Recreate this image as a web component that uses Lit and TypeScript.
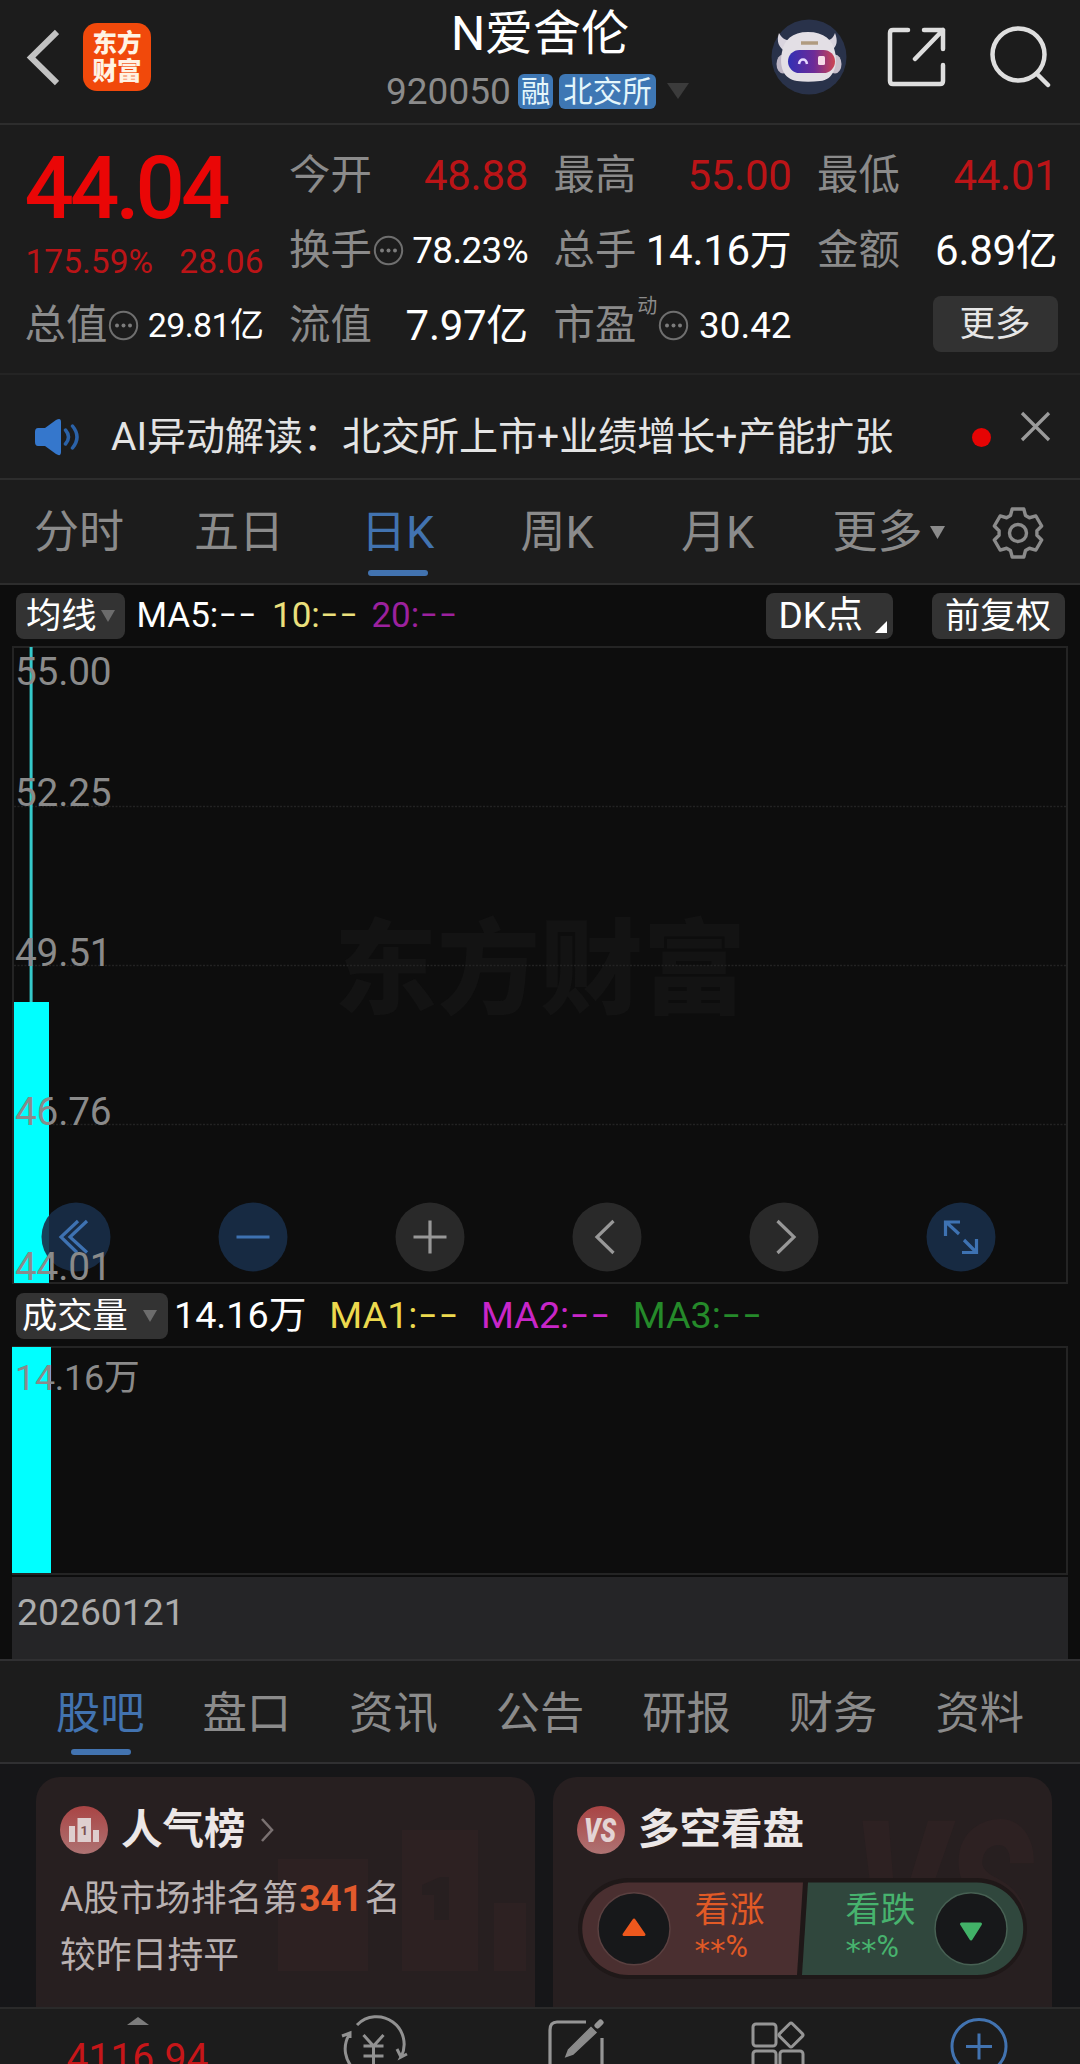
import { LitElement, html, svg, css } from "lit";
import { customElement } from "lit/decorators.js";

const shared = css`
  * { box-sizing: border-box; }
  :host {
    display: block;
    box-sizing: border-box;
    font-family: Roboto, "Noto Sans CJK SC", sans-serif;
    line-height: 1.2;
    white-space: nowrap;
  }
  svg { display: block; flex: none; }
  .row { display: flex; align-items: center; }
  .dash { font-family: Inter, sans-serif; font-size: 1.2em; font-weight: 300; line-height: 0; letter-spacing: 0.3px; position: relative; top: 1.5px; }
`;

const infoIcon = html`<svg class="info" width="31" height="31" viewBox="0 0 31 31">
  <circle cx="15.5" cy="15.5" r="13.7" fill="none" stroke="#6f6f6f" stroke-width="2" />
  <g fill="#7c7c7c"><circle cx="9" cy="15.5" r="2" /><circle cx="15.5" cy="15.5" r="2" /><circle cx="22" cy="15.5" r="2" /></g>
</svg>`;

@customElement("stock-header")
class StockHeader extends LitElement {
  static styles = [shared, css`
    :host { height: 125px; border-bottom: 2px solid #2d2d2d; position: relative; }
    .bar { height: 114px; padding: 0 29px 0 26px; justify-content: space-between; }
    .left { gap: 24px; }
    .share { margin: 0 43px 0 40px; }
    .logo { width: 68px; height: 68px; border-radius: 14px; background: #f1490b; color: #fff3e4;
      font: 900 24.5px/28px "Noto Sans CJK SC", sans-serif; text-align: center; padding-top: 5px; white-space: normal; }
    .center { position: absolute; left: 300px; right: 300px; top: 0; }
    .title { font-size: 48px; line-height: 68px; color: #fff; text-align: center; height: 68px; }
    .sub { display: flex; align-items: center; padding-left: 86px; height: 46px; color: #8b8b8b; font-size: 37px; line-height: 47px; }
    .tag { background: #3e77b4; color: #e4f6fb; border-radius: 6px; height: 35px; line-height: 36px; font-size: 29.5px; padding: 0 4px; margin-left: 6px; }
    .first { padding: 0 3px; margin-left: 7px; }
    .tri { margin-left: 11px; }
  `];
  render() {
    return html`
      <div class="bar row">
        <div class="left row">
          <svg width="33" height="60" viewBox="0 0 33 60"><path d="M31 5 5 30.500 31 56" fill="none" stroke="#c2c2c2" stroke-width="6" /></svg>
          <div class="logo">东方<br />财富</div>
        </div>
        <div class="row">
          <svg width="76" height="76" viewBox="0 0 76 76">
            <circle cx="38" cy="38" r="37.500" fill="#29324a" />
            <path d="M8 14c-3 8 0 15 6 18l8-10c-6 0-11-2-14-8zM64 14c3 8 2 13-3 17l-9-9c6 0 10-2 12-8z" fill="#d9d4de" />
            <ellipse cx="12" cy="45" rx="6.500" ry="9.500" fill="#bdb5c4" />
            <ellipse cx="64" cy="45" rx="6.500" ry="9.500" fill="#c9c0cc" />
            <path d="M37 13c16 0 25 8 27 20 3 13-1 28-15 29-8 1-16 1-23 0C12 60 8 47 11 33c2-12 10-20 26-20z" fill="#e3dfe5" />
            <path d="M30 24h17" stroke="#b09b80" stroke-width="3.500" />
            <defs><linearGradient id="visor"><stop stop-color="#3230b5" /><stop offset=".55" stop-color="#6c2b98" /><stop offset="1" stop-color="#cd4553" /></linearGradient></defs>
            <rect x="17" y="31" width="47" height="23" rx="11.500" fill="url(#visor)" />
            <path d="M28 45c1-6 7-6 8 0" fill="none" stroke="#e5d8ff" stroke-width="2.500" />
            <rect x="47" y="37" width="7" height="9" rx="1.500" fill="#f7dce8" />
          </svg>
          <svg class="share" width="59" height="60" viewBox="0 0 59 60">
            <g fill="none" stroke="#dedede" stroke-width="4.500" stroke-linecap="round" stroke-linejoin="round">
              <path d="M21 3H6Q3 3 3 6v48q0 3 3 3h47q3 0 3-3V38M37 3h19v19M56 3 28 32" />
            </g>
          </svg>
          <svg width="62" height="62" viewBox="0 0 62 62">
            <g fill="none" stroke="#dedede" stroke-width="4.500" stroke-linecap="round"><circle cx="29.500" cy="28.500" r="26" /><path d="M47.500 47.500 59 59" /></g>
          </svg>
        </div>
      </div>
      <div class="center">
        <div class="title">N爱舍伦</div>
        <div class="sub">920050<span class="tag first">融</span><span class="tag">北交所</span>
          <svg class="tri" width="22" height="16" viewBox="0 0 22 16"><path d="M0 0h22L11 16z" fill="#3b3b3b" /></svg></div>
      </div>`;
  }
}

@customElement("stock-quote")
class StockQuote extends LitElement {
  static styles = [shared, css`
    :host { height: 250px; padding: 12.5px 23px 0 24.5px; border-bottom: 2px solid #242424; }
    .grid { display: grid; grid-template-columns: 239px 239px 238px 240.5px; column-gap: 25.5px; grid-template-rows: 75px 75px 75px; }
    .main { grid-row: 1 / 4; }
    .price { height: 99px; line-height: 101px; font-size: 87px; font-weight: 500; color: #ea0606; letter-spacing: -4px; }
    .change { height: 51px; line-height: 52px; font-size: 33.5px; color: #bb1417; justify-content: space-between; padding-left: 1px; }
    .cell { height: 75px; font-size: 41.4px; color: #8b8b8b; line-height: 77px; }
    .cell .v { margin-left: auto; color: #fff; font-size: 42px; letter-spacing: -0.3px; }
    .cell .m { font-size: 36.8px; letter-spacing: -0.6px; }
    .cell .s { font-size: 34px; letter-spacing: -0.6px; }
    .cell .p { letter-spacing: 0; }
    .cell .red { color: #bb1417; }
    .info { margin-left: 1px; }
    .dyn { font-size: 20px; align-self: flex-start; line-height: 36px; margin: 0 0 0 1px; }
    .more { margin-left: auto; width: 125px; height: 56px; line-height: 56px; border-radius: 8px; background: #323232; color: #e6e6e6; font-size: 35.5px; text-align: center; margin-top: -2px; }
  `];
  render() {
    return html`<div class="grid">
      <div class="main">
        <div class="price">44.04</div>
        <div class="change row"><span>175.59%</span><span>28.06</span></div>
        <div class="cell row">总值${infoIcon}<span class="v s">29.81亿</span></div>
      </div>
      <div class="cell row">今开<span class="v red">48.88</span></div>
      <div class="cell row">最高<span class="v red">55.00</span></div>
      <div class="cell row">最低<span class="v red">44.01</span></div>
      <div class="cell row">换手${infoIcon}<span class="v m">78.23%</span></div>
      <div class="cell row">总手<span class="v">14.16万</span></div>
      <div class="cell row">金额<span class="v">6.89亿</span></div>
      <div class="cell row">流值<span class="v">7.97亿</span></div>
      <div class="cell row">市盈<span class="dyn">动</span>${infoIcon}<span class="v m p">30.42</span></div>
      <div class="cell row"><span class="more">更多</span></div>
    </div>`;
  }
}

@customElement("stock-alert")
class StockAlert extends LitElement {
  static styles = [shared, css`
    :host { height: 105px; border-bottom: 2px solid #2d2d2d; }
    .row { height: 103px; padding: 21px 29px 0 34px; }
    .msg { margin-left: 31px; font-size: 39px; line-height: 61px; color: #e4e4e4; }
    .dot { width: 19px; height: 19px; border-radius: 50%; background: #e60404; margin-left: auto; }
    .x { margin: -22px 0 0 29px; }
  `];
  render() {
    return html`<div class="row">
      <svg width="46" height="38" viewBox="0 0 46 38">
        <path d="M4 10h7L22 2q5-3 5 2v30q0 5-5 2l-11-8H4q-3 0-3-4V14q0-4 3-4z" fill="#3577cc" />
        <g fill="none" stroke="#2b62a8" stroke-width="3.500" stroke-linecap="round"><path d="M31.500 12q6 7 0 14M38.500 8q9 11 0 22" /></g>
      </svg>
      <span class="msg">AI异动解读：北交所上市+业绩增长+产能扩张</span>
      <i class="dot"></i>
      <svg class="x" width="31" height="31" viewBox="0 0 31 31"><path d="M2 2 29 29M29 2 2 29" stroke="#9a9a9a" stroke-width="3.300" /></svg>
    </div>`;
  }
}

const gear = (() => {
  const tooth = [[-7.5, -17.5], [-5.8, -24], [5.8, -24], [7.5, -17.5]];
  const pts: string[] = [];
  for (let i = 0; i < 6; i++) {
    const a = (i * Math.PI) / 3;
    for (const [x, y] of tooth) {
      pts.push(`${(x * Math.cos(a) - y * Math.sin(a)).toFixed(2)},${(x * Math.sin(a) + y * Math.cos(a)).toFixed(2)}`);
    }
  }
  return pts.join(" ");
})();

@customElement("period-tabs")
class PeriodTabs extends LitElement {
  static styles = [shared, css`
    :host { height: 105px; border-bottom: 2px solid #2d2d2d; }
    .tabs { display: grid; grid-template-columns: 160px 167px 159.500px 160.500px 151.500px 158px 60px; padding-left: 34px; height: 103px; align-items: center; font-size: 45px; color: #8b8b8b; line-height: 105px; }
    .on { color: #4273b0; position: relative; }
    .on::after { content: ""; position: absolute; left: 6.5px; bottom: 9px; width: 60px; height: 6.5px; border-radius: 3px; background: #4273b0; }
    .more { display: flex; align-items: center; gap: 7px; }
  `];
  render() {
    return html`<div class="tabs">
      <span>分时</span><span>五日</span><span class="on">日K</span><span>周K</span><span>月K</span>
      <span class="more">更多<svg width="15" height="13" viewBox="0 0 15 13"><path d="M0 0h15L7.500 13z" fill="#8b8b8b" /></svg></span>
      <svg width="54" height="54" viewBox="-27 -27 54 54"><g fill="none" stroke="#8b8b8b" stroke-width="3.400" stroke-linejoin="round"><polygon points=${gear} /><circle r="8.500" /></g></svg>
    </div>`;
  }
}

const tools: Array<{ blue: boolean; d: string }> = [
  { blue: true, d: "M2-16-15 0 1 15.500M11-16-6 0 11 15.500" },
  { blue: true, d: "M-16.500 0h33" },
  { blue: false, d: "M-16.500 0h33M0-16.500v33" },
  { blue: false, d: "M6.500-16-10 0 6.500 16" },
  { blue: false, d: "M-6.500-16 10 0-6.500 16" },
  { blue: true, d: "M-15.500-1V-15H-1M-15-15-2-3M15.500 2V15.500H1M15 15 3 3" },
];

@customElement("kline-chart")
class KlineChart extends LitElement {
  static styles = [shared, css`
    :host { background: #0d0d0d; height: 1074px; padding: 0 12px; }
    .head { height: 61px; font-size: 35px; color: #fff; padding: 0 3.500px 0 4px; }
    .btn { background: #333; border-radius: 8px; height: 46px; line-height: 48px; display: flex; align-items: center; font-size: 35.3px; }
    .ma { width: 108.5px; padding-left: 10px; gap: 4px; }
    .dk { width: 127px; padding-left: 13px; margin-left: auto; position: relative; font-size: 37px; }
    .dk svg { position: absolute; right: 6px; bottom: 6px; }
    .fq { width: 133px; justify-content: center; margin-left: 39px; }
    .g1 { margin-left: 12px; } .g2 { margin-left: 15px; } .g3 { margin-left: 13px; }
    .y1 { color: #ebe07c; } .p1 { color: #9c219e; }
    .vol { height: 62px; font-size: 37.7px; color: #fff; padding: 2px 0 0 4px; }
    .vb { width: 152px; padding-left: 6px; gap: 15px; margin: -1px 6px 0 0; }
    .y2 { color: #ecd94e; margin-left: 23px; } .p2 { color: #c826c8; margin-left: 22px; } .gr { color: #258a2a; margin-left: 22px; }
    .pane { position: relative; border: 2px solid #242424; }
    .price { height: 638px; }
    .volume { height: 229px; }
    .pane > svg { position: absolute; left: -2px; top: -2px; }
    .lab { position: absolute; left: 1px; font-size: 38.8px; line-height: 40px; color: #8a8a8a; letter-spacing: -0.2px; }
    .a { top: 4px; } .b { top: 125px; } .c { top: 285px; } .d { top: 444px; } .e { top: 599px; }
    .f { top: 10px; font-size: 35.8px; }
    .mark { position: absolute; left: 320px; top: 240px; font: 900 103px/148px "Noto Sans CJK SC", sans-serif; color: #131313; }
    .tools { position: absolute; left: 27px; right: 70px; bottom: 10px; display: flex; justify-content: space-between; }
    .date { height: 82px; margin-top: 2px; background: #252527; font-size: 37.3px; line-height: 70px; padding-left: 5px; color: #acacac; }
  `];
  render() {
    const tri = html`<svg width="14" height="12" viewBox="0 0 14 12"><path d="M0 0h14L7 12z" fill="#6c6c6c" /></svg>`;
    return html`
      <div class="head row">
        <div class="btn ma">均线${tri}</div>
        <span class="g1">MA5:<span class="dash">--</span></span>
        <span class="g2 y1">10:<span class="dash">--</span></span>
        <span class="g3 p1">20:<span class="dash">--</span></span>
        <div class="btn dk">DK点<svg width="12" height="12" viewBox="0 0 12 12"><path d="M12 0v12H0z" fill="#fff" /></svg></div>
        <div class="btn fq">前复权</div>
      </div>
      <div class="pane price">
        <div class="mark">东方财富</div>
        <svg width="1056" height="638" viewBox="0 0 1056 638">
          <path d="M2 160.500H1054M2 319.500H1054M2 478.500H1054" stroke="#232323" stroke-width="1.500" stroke-dasharray="2 1.500" />
          <rect x="17.600" y="1" width="3" height="357" fill="#35c9cb" />
          <rect x="2" y="356" width="35" height="281" fill="#00ffff" />
        </svg>
        <div class="tools">
          ${tools.map((t) => html`<svg width="70" height="70" viewBox="-35 -35 70 70">
            <circle r="34.500" fill=${t.blue ? "#182d48" : "#2c2c2c"} fill-opacity=".9" />
            ${svg`<path d=${t.d} fill="none" stroke=${t.blue ? "#3e72b2" : "#989898"} stroke-width="3.200" />`}
          </svg>`)}
        </div>
        <span class="lab a">55.00</span><span class="lab b">52.25</span><span class="lab c">49.51</span>
        <span class="lab d">46.76</span><span class="lab e">44.01</span>
      </div>
      <div class="vol row">
        <div class="btn vb">成交量${tri}</div>
        <span>14.16万</span>
        <span class="y2">MA1:<span class="dash">--</span></span>
        <span class="p2">MA2:<span class="dash">--</span></span>
        <span class="gr">MA3:<span class="dash">--</span></span>
      </div>
      <div class="pane volume">
        <svg width="1056" height="229" viewBox="0 0 1056 229"><rect x="0" y="1" width="39" height="226" fill="#00ffff" /></svg>
        <span class="lab f">14.16万</span>
      </div>
      <div class="date">20260121</div>`;
  }
}

@customElement("section-tabs")
class SectionTabs extends LitElement {
  static styles = [shared, css`
    :host { height: 105px; border-top: 2px solid #303032; border-bottom: 2px solid #303032; }
    .tabs { display: flex; justify-content: space-between; padding: 0 56px; font-size: 44.3px; line-height: 106px; color: #8b8b8b; height: 101px; }
    .on { color: #4273b0; position: relative; }
    .on::after { content: ""; position: absolute; left: 15px; top: 87.5px; width: 60px; height: 6.5px; border-radius: 3px; background: #4273b0; }
  `];
  render() {
    return html`<div class="tabs">${["股吧", "盘口", "资讯", "公告", "研报", "财务", "资料"].map(
      (t, i) => html`<span class=${i === 0 ? "on" : ""}>${t}</span>`)}</div>`;
  }
}

@customElement("insight-cards")
class InsightCards extends LitElement {
  static styles = [shared, css`
    :host { height: 243px; background: #161618; overflow: hidden; padding: 13px 27px 0 36px; }
    .cards { display: flex; gap: 18px; }
    .card { position: relative; width: 499px; height: 260px; border-radius: 24px; background: #271f20; padding: 29px 24px; overflow: hidden; }
    .bg { position: absolute; left: 0; top: 0; }
    .head { position: relative; height: 48px; color: #ece7e7; font-size: 41.5px; font-weight: 700; line-height: 50px; }
    .head .t { margin: 0 14px 0 13px; }
    .line { position: relative; font-size: 35.8px; line-height: 57px; color: #b9b1b1; }
    .l1 { margin-top: 16px; }
    .line b { color: #e25a2c; font-size: 37px; margin: 0 2px 0 1px; }
    .pill { position: absolute; left: 25px; top: 101px; }
    .opt { position: absolute; top: 113px; font-size: 35px; line-height: 42px; }
    .pct { display: flex; font-size: 30.5px; line-height: 30px; height: 30px; }
    .star { font-family: "DejaVu Sans", sans-serif; font-size: 31px; margin-top: 3px; }
    .up { left: 141.5px; color: #e25a26; }
    .down { left: 292.5px; color: #47b36e; }
  `];
  render() {
    return html`<div class="cards">
      <div class="card">
        <svg class="bg" width="499" height="260" viewBox="0 0 499 260"><g fill="#2d2122"><path d="M242 82h90v112h-90zM366 53h76v141h-76zM458 126h32v68h-32z" /></g><path d="M386 108l18-8h9v43h-15v-25h-12z" fill="#271f20" /></svg>
        <div class="head row">
          <svg width="48" height="48" viewBox="0 0 48 48">
            <defs><linearGradient id="g1" x2="0" y2="1"><stop stop-color="#a94444" /><stop offset="1" stop-color="#ae7373" /></linearGradient></defs>
            <circle cx="24" cy="24" r="24" fill="url(#g1)" /><path d="M9 20h6v16H9zM17.500 12H31v24H17.500zM33 24h6v12h-6z" fill="#decfcf" />
            <text x="24.300" y="29" font-size="13" font-weight="700" text-anchor="middle" fill="#7b5252">1</text>
          </svg>
          <span class="t">人气榜</span>
          <svg width="15" height="24" viewBox="0 0 15 24"><path d="M2 1 12 12 2 23" fill="none" stroke="#7a7171" stroke-width="2.600" /></svg>
        </div>
        <div class="line l1">A股市场排名第<b>341</b>名</div>
        <div class="line">较昨日持平</div>
      </div>
      <div class="card">
        <svg class="bg" width="499" height="260" viewBox="0 0 499 260"><text x="300" y="186" font-size="200" font-weight="900" font-style="italic" font-family="Roboto, sans-serif" textLength="180" lengthAdjust="spacingAndGlyphs" fill="#2d2122">VS</text></svg>
        <div class="head row">
          <svg width="48" height="48" viewBox="0 0 48 48">
            <defs><linearGradient id="g2" x2="0" y2="1"><stop stop-color="#a94444" /><stop offset="1" stop-color="#ae7373" /></linearGradient></defs>
            <circle cx="24" cy="24" r="24" fill="url(#g2)" />
            <text x="23" y="35.500" font-size="33" font-weight="900" font-style="italic" text-anchor="middle" textLength="32" lengthAdjust="spacingAndGlyphs" fill="#e3d4d4">VS</text>
          </svg>
          <span class="t">多空看盘</span>
        </div>
        <svg class="pill" width="450" height="102" viewBox="0 0 450 102">
          <rect width="449" height="101" rx="50.500" fill="#1f1818" />
          <path d="M50.500 4.500H225L219 97H50.500a46 46 0 0 1 0-92.500z" fill="#4a2f30" />
          <path d="M230 4.500H399a46 46 0 0 1 0 92.500H224z" fill="#30473d" />
          <circle cx="56" cy="50.700" r="36" fill="#17181a" stroke="#5a4040" stroke-width="1.500" />
          <circle cx="393" cy="50.700" r="36" fill="#17181a" stroke="#476053" stroke-width="1.500" />
          <path d="M56 42 66 56.500H46z" fill="#ee581d" stroke="#ee581d" stroke-width="3" stroke-linejoin="round" />
          <path d="M393 61 402.500 46h-19z" fill="#42b268" stroke="#42b268" stroke-width="3" stroke-linejoin="round" />
        </svg>
        <div class="opt up">看涨<div class="pct"><span class="star">**</span>%</div></div>
        <div class="opt down">看跌<div class="pct"><span class="star">**</span>%</div></div>
      </div>
    </div>`;
  }
}

@customElement("bottom-bar")
class BottomBar extends LitElement {
  static styles = [shared, css`
    :host { height: 57px; border-top: 2px solid #2a2a2a; overflow: hidden; }
    .bar { display: flex; align-items: flex-start; padding-left: 66px; }
    .idx { width: 143px; display: flex; flex-direction: column; align-items: center; padding-top: 8px; color: #c61619; font-size: 39px; line-height: 46px; }
    .idx span { margin-top: 10px; }
    .trade { margin: 6px 0 0 129px; } .edit { margin: 9px 0 0 140px; } .apps { margin: 9px 0 0 145px; } .add { margin: 8px 0 0 144px; }
  `];
  render() {
    return html`<div class="bar">
      <div class="idx"><svg width="22" height="8" viewBox="0 0 22 8"><path d="M0 8 11 0l11 8z" fill="#7c7c7c" /></svg><span>4116.94</span></div>
      <svg class="trade" width="70" height="64" viewBox="0 0 70 64">
        <g fill="none" stroke="#919191" stroke-width="3"><path d="M19 10a27.500 27.500 0 0 1 44 32l6-3M63 42l-4-8M4 21l8-3v5M11 20a27.500 27.500 0 0 0 6 35" />
        <path d="M25.500 20 35.500 31 45.500 20M35.500 31v24M25.500 31h20M25.500 41h20" /></g>
      </svg>
      <svg class="edit" width="56" height="60" viewBox="0 0 56 60">
        <path d="M38 4H9Q2 4 2 12v60M54 20v52" fill="none" stroke="#959595" stroke-width="3.200" />
        <path d="M43 9.500 48 14.500 25 36 18 38.500 20.500 32z" fill="#8b8b8b" stroke="#8b8b8b" stroke-width="1.500" /><path d="M49.500 7.500 52.500 4.500" stroke="#959595" stroke-width="6" stroke-linecap="round" />
      </svg>
      <svg class="apps" width="56" height="60" viewBox="0 0 56 60"><g fill="none" stroke="#959595" stroke-width="3" stroke-linejoin="round">
        <rect x="4" y="6" width="23" height="22" rx="3" /><rect x="4" y="33" width="23" height="22" rx="3" /><rect x="31" y="33" width="23" height="22" rx="3" />
        <rect x="33" y="8" width="18" height="18" rx="2" transform="rotate(45 42 17)" /></g>
      </svg>
      <svg class="add" width="60" height="60" viewBox="0 0 60 60"><g fill="none" stroke="#4273b0" stroke-width="3"><circle cx="30" cy="29.500" r="27" /><path d="M17 29.500h26M30 16.500v26" /></g></svg>
    </div>`;
  }
}

@customElement("app-root")
class AppRoot extends LitElement {
  static styles = css`
    :host { display: block; width: 1080px; height: 2064px; background: #1c1c1c; overflow: hidden; }
  `;
  render() {
    return html`
      <stock-header></stock-header>
      <stock-quote></stock-quote>
      <stock-alert></stock-alert>
      <period-tabs></period-tabs>
      <kline-chart></kline-chart>
      <section-tabs></section-tabs>
      <insight-cards></insight-cards>
      <bottom-bar></bottom-bar>`;
  }
}
